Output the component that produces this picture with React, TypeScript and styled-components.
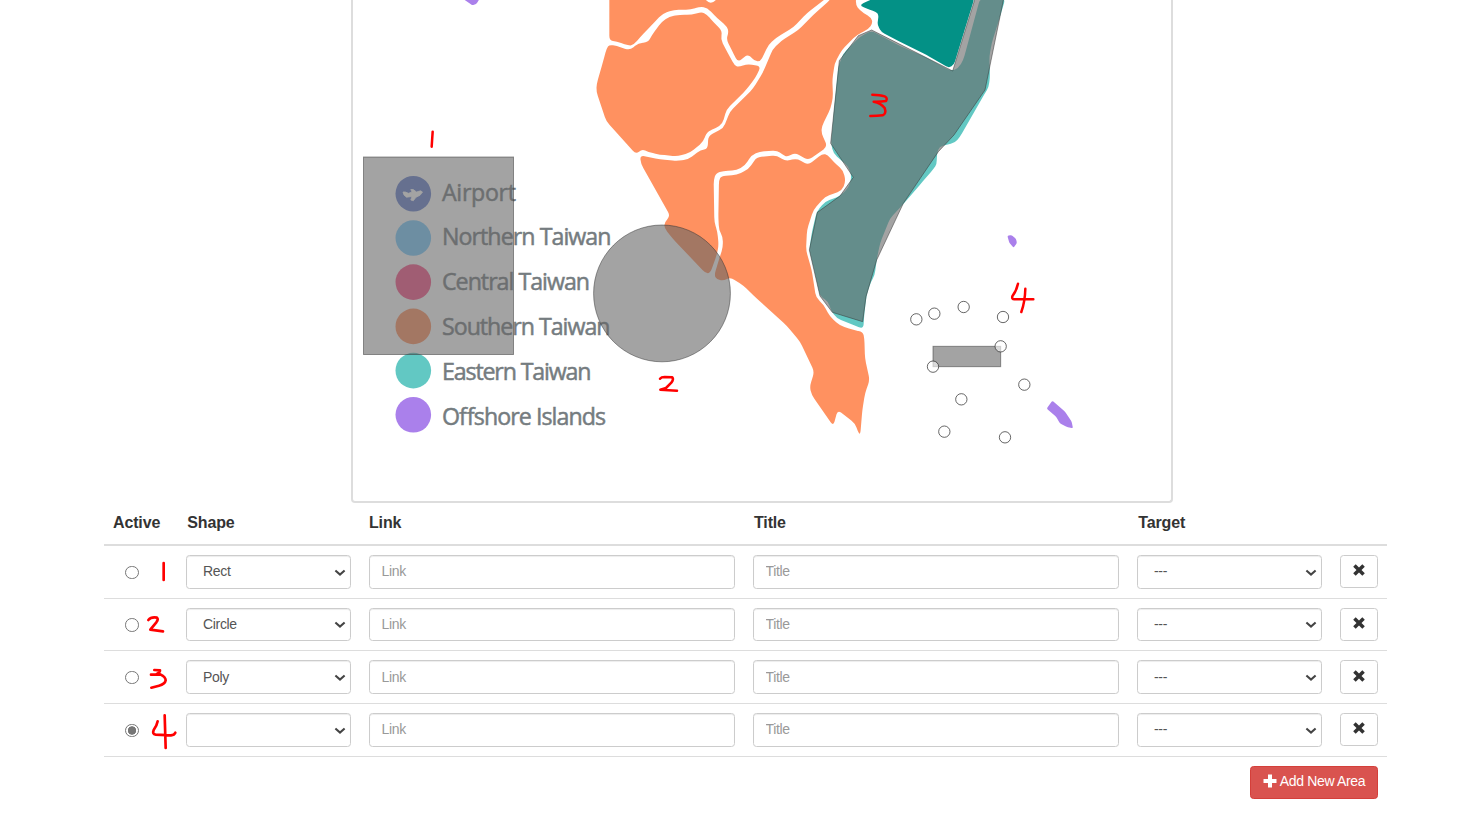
import React from "react";
import styled, { createGlobalStyle } from "styled-components";

const GlobalStyle = createGlobalStyle`
  *, *::before, *::after { box-sizing: border-box; }
  body {
    margin: 0;
    background: #fff;
    color: #333;
    font-family: "Liberation Sans", Arial, sans-serif;
    font-size: 14px;
    overflow: hidden;
  }
`;

type Point = [number, number];

/** Closed outline through the points, with every corner softened by up to `radius`. */
function outline(points: Point[], radius = 14): string {
  const n = points.length;
  const toward = (from: Point, to: Point): Point => {
    const dx = to[0] - from[0];
    const dy = to[1] - from[1];
    const length = Math.hypot(dx, dy) || 1;
    const step = Math.min(length / 2, radius);
    return [from[0] + (dx / length) * step, from[1] + (dy / length) * step];
  };
  const parts = points.map((p, i) => {
    const a = toward(p, points[(i + n - 1) % n]);
    const b = toward(p, points[(i + 1) % n]);
    return `${i === 0 ? "M" : "L"}${a[0].toFixed(1)} ${a[1].toFixed(1)}Q${p[0]} ${p[1]} ${b[0].toFixed(1)} ${b[1].toFixed(1)}`;
  });
  return parts.join("") + "Z";
}

const SOUTH: Point[][] = [
  [[88, -60], [88, 121], [110, 125], [147, 137], [160, 135], [182, 110], [215, 75], [247, 42], [282, 29], [332, 29], [360, 20], [382, 23], [402, 45], [441, 80], [446, 96], [439, 118], [455, 150], [474, 187], [504, 162], [524, 183], [541, 184], [551, 165], [565, 135], [590, 112], [640, 82], [680, 40], [737, -4], [800, -60]],
  [[80, 145], [88, 134], [110, 138], [150, 151], [175, 129], [204, 127], [215, 107], [245, 65], [268, 50], [300, 44], [335, 44], [365, 36], [380, 43], [400, 66], [427, 93], [422, 118], [436, 145], [464, 197], [476, 201], [502, 192], [543, 199], [525, 235], [500, 268], [440, 328], [427, 372], [408, 384], [380, 396], [370, 425], [330, 458], [292, 469], [240, 464], [205, 456], [186, 447], [168, 463], [79, 364], [49, 275], [50, 252], [69, 185]],
  [[752, -2], [700, 45], [655, 90], [602, 124], [578, 148], [550, 215], [520, 265], [450, 335], [430, 385], [385, 407], [383, 447], [362, 450], [325, 478], [292, 483], [240, 478], [180, 466], [183, 492], [271, 648], [253, 668], [253, 684], [280, 718], [377, 820], [391, 819], [411, 762], [416, 735], [412, 695], [403, 665], [401, 540], [408, 519], [430, 513], [470, 511], [495, 496], [515, 465], [540, 454], [592, 452], [607, 463], [622, 471], [645, 458], [685, 481], [742, 440], [724, 398], [726, 378], [752, 325], [759, 290], [757, 240], [764, 190], [785, 150], [830, 105], [865, 88], [878, 70], [874, 53], [840, 32], [827, 15], [832, -60], [780, -60]],
  [[417, 540], [424, 528], [470, 525], [505, 508], [530, 472], [590, 466], [617, 484], [650, 475], [685, 495], [728, 461], [743, 465], [760, 485], [790, 512], [797, 545], [785, 572], [760, 582], [735, 590], [700, 630], [681, 690], [678, 750], [695, 810], [708, 893], [730, 913], [750, 950], [780, 977], [820, 990], [849, 996], [853, 1015], [855, 1075], [869, 1140], [855, 1180], [847, 1230], [841, 1302], [836, 1300], [825, 1270], [773, 1230], [760, 1278], [695, 1185], [689, 1160], [703, 1115], [660, 1025], [620, 977], [530, 895], [490, 857], [452, 832], [430, 842], [410, 838], [403, 825], [412, 795], [429, 740], [428, 710], [417, 690], [415, 650]],
];

const EAST: Point[] = [
  [1276, -4], [1260, 50], [1235, 130], [1228, 170], [1230, 230], [1226, 262], [1215, 280], [1140, 410], [1125, 428], [1100, 434], [1078, 440], [1071, 460], [1070, 493], [1062, 505], [1028, 545], [970, 612], [930, 655], [900, 730], [890, 780], [884, 826], [873, 845], [860, 885], [853, 940], [850, 987], [770, 955], [752, 930], [745, 905], [720, 888], [705, 820], [688, 750], [695, 700], [710, 635], [735, 605], [780, 588], [806, 562], [815, 530], [805, 500], [760, 460], [753, 430], [762, 330], [775, 200], [790, 160], [840, 110], [875, 92], [960, 138], [1040, 173], [1112, 213], [1135, 205], [1150, 180], [1200, -4],
];

const NORTH_EAST: Point[] = [
  [1183, -4], [1122, 194], [1107, 204], [1040, 165], [960, 125], [905, 97], [892, 75], [896, 44], [888, 35], [860, 26], [841, 17], [848, 10], [880, -4],
];

const SELECTED_POLY =
  "1185,-4 1118,213 875,90 835,107 778,182 752,430 820,532 780,588 712,637 688,750 720,888 757,937 848,965 858,890 890,780 970,610 1075,455 1122,405 1215,270 1271,-4";

const ISLANDS: Point[][] = [
  [[-354, -6], [-335, 8], [-322, 16], [-310, 11], [-300, -6]],
  [[1282, 707], [1295, 705], [1308, 717], [1311, 729], [1301, 743], [1288, 728]],
  [[1417, 1202], [1400, 1226], [1428, 1250], [1440, 1270], [1460, 1281], [1479, 1285], [1475, 1265], [1455, 1235]],
];

const HANDLES: Point[] = [
  [1009, 958], [1063, 941], [1151, 921], [1269, 951], [1262, 1039], [1059, 1100], [1333, 1154], [1144, 1198], [1093, 1295], [1275, 1312],
];

const LEGEND = [
  { label: "Airport", color: "#667fcd", cy: 193.7, y: 201, width: 74 },
  { label: "Northern Taiwan", color: "#78cafc", cy: 238, y: 245, width: 169.5 },
  { label: "Central Taiwan", color: "#f75287", cy: 282.1, y: 290, width: 148 },
  { label: "Southern Taiwan", color: "#ff9160", cy: 326.4, y: 335, width: 168.5 },
  { label: "Eastern Taiwan", color: "#62c8c3", cy: 370.6, y: 380, width: 149.5 },
  { label: "Offshore Islands", color: "#aa80eb", cy: 414.8, y: 425, width: 164 },
];

const Page = styled.main`
  width: 1283px;
  margin-left: 104px;
  display: flex;
  flex-direction: column;
`;

const MapPanel = styled.section`
  width: 822px;
  height: 503px;
  margin-left: 247px;
  border: 2px solid #ddd;
  border-top: 0;
  border-radius: 0 0 4px 4px;
`;

const MapDrawing = styled.svg`
  display: block;
  width: 818px;
  height: 501px;
`;

const LegendText = styled.text`
  font-family: "Open Sans", "Noto Sans", sans-serif;
  font-size: 23.2px;
  fill: #757c80;
  stroke: #757c80;
  stroke-width: 0.5px;
`;

const columns = "55px 165px 366px 366px 185px 38px";

const HeaderRow = styled.div`
  display: grid;
  grid-template-columns: ${columns};
  column-gap: 18px;
  height: 43px;
  padding: 10px 9px 0;
  border-bottom: 2px solid #ddd;
  font-size: 16px;
  line-height: 19px;
  letter-spacing: -0.15px;
  font-weight: bold;
`;

const HeaderCell = styled.span<{ $indent?: number }>`
  padding-left: ${(p) => p.$indent ?? 0}px;
`;

const AreaRow = styled.div`
  display: grid;
  grid-template-columns: ${columns};
  column-gap: 18px;
  height: 52.7px;
  padding: 9px 9px 0;
  border-bottom: 1px solid #ddd;
`;

const ActiveCell = styled.div`
  position: relative;
  height: 33.5px;
  display: flex;
  align-items: center;
  padding-left: 12px;
`;

const Radio = styled.input`
  appearance: none;
  width: 13.5px;
  height: 13.5px;
  margin: 1px 0 0;
  border: 1.2px solid #767676;
  border-radius: 50%;
  background: #fff;
  &:checked {
    background: radial-gradient(circle, #767676 0 3.9px, #fff 4.5px);
  }
`;

const Mark = styled.svg`
  position: absolute;
  left: 31px;
  top: -9px;
  width: 34px;
  height: 52.7px;
  fill: none;
  stroke: #f00;
  stroke-width: 8;
  stroke-linecap: round;
  stroke-linejoin: round;
`;

const controlStyle = `
  height: 33.5px;
  width: 100%;
  margin: 0;
  border: 1px solid #ccc;
  border-radius: 3.5px;
  background-color: #fff;
  color: #555;
  font-family: inherit;
  font-size: 14px;
  letter-spacing: -0.33px;
  box-shadow: inset 0 1px 1px rgba(0, 0, 0, 0.075);
  outline: none;
`;

const SelectBox = styled.div`
  position: relative;
`;

const Select = styled.select`
  ${controlStyle}
  appearance: none;
  padding: 0 0 1px 16px;
`;

const Chevron = styled.svg`
  position: absolute;
  right: 5px;
  top: 13.5px;
  width: 12px;
  height: 8px;
  fill: none;
  stroke: #444;
  stroke-width: 2.1;
  pointer-events: none;
`;

const TextInput = styled.input`
  ${controlStyle}
  padding: 0 11.500px 1px;
  &::placeholder { color: #999; opacity: 1; }
`;

const RemoveButton = styled.button`
  width: 38px;
  height: 33.4px;
  padding: 0 0 3px;
  border: 1px solid #ccc;
  border-radius: 3.5px;
  background: #fff;
  display: flex;
  align-items: center;
  justify-content: center;
`;

const Footer = styled.div`
  display: flex;
  justify-content: flex-end;
  padding: 9px 9px 0;
`;

const AddButton = styled.button`
  width: 128px;
  height: 33px;
  padding: 0 0 2px;
  border: 1px solid #d43f3a;
  border-radius: 3.5px;
  background: #d9534f;
  color: #fff;
  font-family: inherit;
  font-size: 14px;
  letter-spacing: -0.33px;
  display: flex;
  align-items: center;
  justify-content: center;
  gap: 3px;
  white-space: nowrap;
`;

const AREAS = [
  { shape: "Rect", viewBox: "147 138 102 158", mark: "M206 189V240" },
  { shape: "Circle", viewBox: "147 296 102 158", mark: "M160 359Q168 349 186 352Q191 356 184 366L166 388L204 393" },
  { shape: "Poly", viewBox: "147 34 102 158", mark: "M178 91L195 92Q196 98 182 105L168 105L196 104Q212 112 212 122Q210 134 192 138L169 144" },
  { shape: "", viewBox: "147 192 102 158", mark: "M188 244Q186 256 176 270Q171 283 182 284L228 286Q238 285 241 278M209 226L212 324", active: true },
];

function Dropdown({ value }: { value: string }) {
  return (
    <SelectBox>
      <Select defaultValue={value}>
        <option>{value}</option>
      </Select>
      <Chevron viewBox="0 0 12 8">
        <path d="M1.400 1.500L6 5.500L10.600 1.500" />
      </Chevron>
    </SelectBox>
  );
}

function TaiwanMap() {
  return (
    <MapDrawing viewBox="353 0 818 501">
      <g transform="translate(580 0) scale(0.33333)">
        {SOUTH.map((points, i) => (
          <path key={i} d={outline(points)} fill="#ff9160" />
        ))}
        <path d="M374 -4Q384 8 392 8Q402 8 411 -4Z" fill="#fff" />
        <path d={outline(EAST)} fill="#62c8c3" />
        <path d={outline(NORTH_EAST, 10)} fill="#039186" />
        {ISLANDS.map((points, i) => (
          <path key={i} d={outline(points, 4)} fill="#aa80eb" />
        ))}
      </g>

      {LEGEND.map((item) => (
        <g key={item.label}>
          <circle cx="413.3" cy={item.cy} r="17.8" fill={item.color} />
          <LegendText x="442" y={item.y} textLength={item.width}>
            {item.label}
          </LegendText>
        </g>
      ))}
      <path
        d="M403 192L404 195L406.500 197.200L412 196.500L410.800 200L413.300 200.800L416 197.200L420 195.300L422.500 192L420.500 190.800L416.500 192L413.200 189.500L410.800 189.500L412 192L408.500 193.300L405.300 192Z"
        fill="#fff"
        stroke="#fff"
        strokeWidth="0.8"
        strokeLinejoin="round"
      />

      <g fill="rgba(102,102,102,0.6)" stroke="rgba(51,51,51,0.5)" strokeWidth="1">
        <rect x="363.500" y="157" width="150" height="197.500" />
        <circle cx="662" cy="293.400" r="68.400" />
      </g>
      <g transform="translate(580 0) scale(0.33333)" fill="rgba(102,102,102,0.6)" stroke="rgba(51,51,51,0.5)" strokeWidth="3">
        <polygon points={SELECTED_POLY} />
        <rect x="1059" y="1039" width="203" height="61" />
        {HANDLES.map(([cx, cy]) => (
          <circle key={cx} cx={cx} cy={cy} r="17" fill="rgba(255,255,255,0.6)" stroke="rgba(51,51,51,0.75)" />
        ))}
      </g>

      <g
        transform="translate(580 0) scale(0.33333)"
        fill="none"
        stroke="#f00"
        strokeWidth="7.5"
        strokeLinecap="round"
        strokeLinejoin="round"
      >
        <path d="M-442 395L-445 440" />
        <path d="M877 284Q900 284 914 289Q924 294 918 303Q900 306 881 305Q902 308 914 324Q920 341 908 346Q892 348 871 348" />
        <path d="M240 1136Q244 1131 254 1131L277 1132Q282 1138 274 1148L258 1164L241 1169L291 1172" />
        <path d="M1314 851Q1309 873 1297 889Q1295 898 1303 898L1360 898M1336 866Q1335 905 1324 936" />
      </g>
    </MapDrawing>
  );
}

export default function App() {
  return (
    <>
      <GlobalStyle />
      <Page>
        <MapPanel>
          <TaiwanMap />
        </MapPanel>
        <HeaderRow>
          <HeaderCell>Active</HeaderCell>
          <HeaderCell $indent={1.3}>Shape</HeaderCell>
          <HeaderCell>Link</HeaderCell>
          <HeaderCell $indent={1}>Title</HeaderCell>
          <HeaderCell $indent={1.3}>Target</HeaderCell>
        </HeaderRow>
        {AREAS.map((area, i) => (
          <AreaRow key={i}>
            <ActiveCell>
              <Radio type="radio" name="active" defaultChecked={area.active} />
              <Mark viewBox={area.viewBox}>
                <path d={area.mark} />
              </Mark>
            </ActiveCell>
            <Dropdown value={area.shape} />
            <TextInput placeholder="Link" />
            <TextInput placeholder="Title" />
            <Dropdown value="---" />
            <RemoveButton>
              <svg width="12" height="12" viewBox="0 0 12 12" fill="#333">
                <path d="M2.700 0.200L6 3.400L9.300 0.200L11.800 2.700L8.500 6L11.800 9.300L9.300 11.800L6 8.600L2.700 11.800L0.200 9.300L3.500 6L0.200 2.700Z" />
              </svg>
            </RemoveButton>
          </AreaRow>
        ))}
        <Footer>
          <AddButton>
            <svg width="14" height="14" viewBox="0 0 14 14" fill="#fff">
              <path d="M5 0.500H9V5H13.500V9H9V13.500H5V9H0.500V5H5Z" />
            </svg>
            Add New Area
          </AddButton>
        </Footer>
      </Page>
    </>
  );
}
